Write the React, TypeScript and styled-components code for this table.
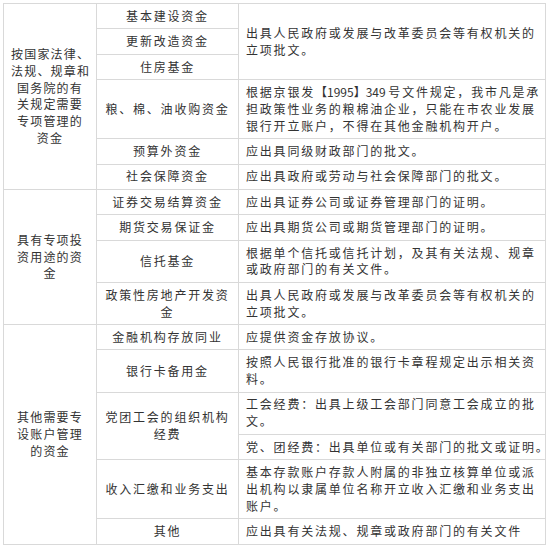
import React from 'react';
import styled, { createGlobalStyle } from 'styled-components';

const GlobalStyle = createGlobalStyle`
    html,
    body {
        margin: 0;
        padding: 0;
        background: #ffffff;
    }
`;

const Page = styled('div')`
    padding: 3px;
    width: 550px;
    box-sizing: border-box;
`;

const Table = styled('table')`
    width: 542px;
    table-layout: fixed;
    border-collapse: collapse;
    font-family: 'Noto Sans CJK SC', 'Noto Sans', sans-serif;
    font-size: 12px;
    line-height: 16.8px;
    color: #333333;
`;

const Cell = styled('td')<{ $align?: 'left' | 'center'; $tight?: boolean }>`
    border: 1px solid #d9d9d9;
    padding: 3.8px 7px;
    vertical-align: middle;
    white-space: nowrap;
    text-align: ${(p) => p.$align || 'center'};
    letter-spacing: ${(p) => (p.$tight ? '1.2px' : '1.8px')};
`;

const Narrow = styled('span')`
    letter-spacing: 0;
`;

type Line = React.ReactNode;

const Lines = ({ lines }: { lines: Line[] }) => (
    <>
        {lines.map((line, i) => (
            <React.Fragment key={i}>
                {i > 0 && <br />}
                {line}
            </React.Fragment>
        ))}
    </>
);

const Group = ({ lines, span }: { lines: Line[]; span: number }) => (
    <Cell rowSpan={span} $tight>
        <Lines lines={lines} />
    </Cell>
);

const Name = ({ lines, span }: { lines: Line[]; span?: number }) => (
    <Cell rowSpan={span}>
        <Lines lines={lines} />
    </Cell>
);

const Rule = ({ lines, span }: { lines: Line[]; span?: number }) => (
    <Cell rowSpan={span} $align="left">
        <Lines lines={lines} />
    </Cell>
);

const App = () => (
    <Page>
        <GlobalStyle />
        <Table>
            <colgroup>
                <col style={{ width: 93 }} />
                <col style={{ width: 142 }} />
                <col style={{ width: 307 }} />
            </colgroup>
            <tbody>
                <tr>
                    <Group span={6} lines={['按国家法律、', '法规、规章和', '国务院的有', '关规定需要', '专项管理的', '资金']} />
                    <Name lines={['基本建设资金']} />
                    <Rule span={3} lines={['出具人民政府或发展与改革委员会等有权机关的', '立项批文。']} />
                </tr>
                <tr>
                    <Name lines={['更新改造资金']} />
                </tr>
                <tr>
                    <Name lines={['住房基金']} />
                </tr>
                <tr>
                    <Name lines={['粮、棉、油收购资金']} />
                    <Rule
                        lines={[
                            <>
                                根据京银发<Narrow>【1995】349 </Narrow>号文件规定，我市凡是承
                            </>,
                            '担政策性业务的粮棉油企业，只能在市农业发展',
                            '银行开立账户，不得在其他金融机构开户。',
                        ]}
                    />
                </tr>
                <tr>
                    <Name lines={['预算外资金']} />
                    <Rule lines={['应出具同级财政部门的批文。']} />
                </tr>
                <tr>
                    <Name lines={['社会保障资金']} />
                    <Rule lines={['应出具政府或劳动与社会保障部门的批文。']} />
                </tr>
                <tr>
                    <Group span={4} lines={['具有专项投', '资用途的资', '金']} />
                    <Name lines={['证券交易结算资金']} />
                    <Rule lines={['应出具证券公司或证券管理部门的证明。']} />
                </tr>
                <tr>
                    <Name lines={['期货交易保证金']} />
                    <Rule lines={['应出具期货公司或期货管理部门的证明。']} />
                </tr>
                <tr>
                    <Name lines={['信托基金']} />
                    <Rule lines={['根据单个信托或信托计划，及其有关法规、规章', '或政府部门的有关文件。']} />
                </tr>
                <tr>
                    <Name lines={['政策性房地产开发资', '金']} />
                    <Rule lines={['出具人民政府或发展与改革委员会等有权机关的', '立项批文。']} />
                </tr>
                <tr>
                    <Group span={6} lines={['其他需要专', '设账户管理', '的资金']} />
                    <Name lines={['金融机构存放同业']} />
                    <Rule lines={['应提供资金存放协议。']} />
                </tr>
                <tr>
                    <Name lines={['银行卡备用金']} />
                    <Rule lines={['按照人民银行批准的银行卡章程规定出示相关资', '料。']} />
                </tr>
                <tr>
                    <Name span={2} lines={['党团工会的组织机构', '经费']} />
                    <Rule lines={['工会经费：出具上级工会部门同意工会成立的批', '文。']} />
                </tr>
                <tr>
                    <Rule lines={['党、团经费：出具单位或有关部门的批文或证明。']} />
                </tr>
                <tr>
                    <Name lines={['收入汇缴和业务支出']} />
                    <Rule
                        lines={[
                            '基本存款账户存款人附属的非独立核算单位或派',
                            '出机构以隶属单位名称开立收入汇缴和业务支出',
                            '账户。',
                        ]}
                    />
                </tr>
                <tr>
                    <Name lines={['其他']} />
                    <Rule lines={['应出具有关法规、规章或政府部门的有关文件']} />
                </tr>
            </tbody>
        </Table>
    </Page>
);

export default App;
